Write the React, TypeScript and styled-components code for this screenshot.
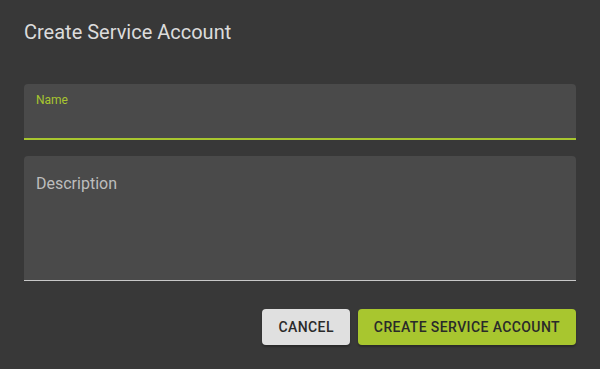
import styled, { createGlobalStyle } from 'styled-components';

const GlobalStyle = createGlobalStyle`
  html, body {
    margin: 0;
    padding: 0;
    background: #383838;
  }
  * {
    box-sizing: border-box;
  }
`;

const Dialog = styled.div`
  width: 600px;
  height: 369px;
  background: #383838;
  font-family: Roboto, 'Liberation Sans', sans-serif;
  display: flex;
  flex-direction: column;
`;

const Title = styled.h2`
  margin: 0;
  padding: 16px 24px;
  font-size: 20px;
  font-weight: 400;
  line-height: 32px;
  color: #dcdcdc;
`;

const Content = styled.div`
  padding: 20px 24px 0;
  display: flex;
  flex-direction: column;
  gap: 16px;
`;

const Field = styled.div<{ $focused?: boolean; $height: number }>`
  position: relative;
  height: ${({ $height }) => $height}px;
  background: #4a4a4a;
  border-radius: 4px 4px 0 0;
  border-bottom: ${({ $focused }) =>
    $focused ? '2px solid #a8c62f' : '1px solid #c8c8c8'};
  padding: 0 12px;
`;

const SmallLabel = styled.label`
  display: block;
  padding-top: 9px;
  font-size: 12px;
  line-height: 14px;
  color: #a8c62f;
`;

const Placeholder = styled.label`
  display: block;
  padding-top: 18px;
  font-size: 16px;
  line-height: 19px;
  color: #bdbdbd;
`;

const Actions = styled.div`
  margin-top: auto;
  padding: 0 24px 24px;
  display: flex;
  justify-content: flex-end;
  gap: 8px;
`;

const Button = styled.button<{ $primary?: boolean }>`
  height: 36px;
  padding: 0 16px;
  border: none;
  border-radius: 4px;
  font-family: Roboto, 'Liberation Sans', sans-serif;
  font-size: 14px;
  font-weight: 500;
  letter-spacing: 0.4px;
  text-transform: uppercase;
  color: #2a2a2a;
  background: ${({ $primary }) => ($primary ? '#a8c62f' : '#e0e0e0')};
  box-shadow: 0 2px 2px rgba(0, 0, 0, 0.25);
  cursor: pointer;
`;

export default function App() {
  return (
    <>
      <GlobalStyle />
      <Dialog>
        <Title>Create Service Account</Title>
        <Content>
          <Field $focused $height={56}>
            <SmallLabel>Name</SmallLabel>
          </Field>
          <Field $height={125}>
            <Placeholder>Description</Placeholder>
          </Field>
        </Content>
        <Actions>
          <Button>Cancel</Button>
          <Button $primary>Create Service Account</Button>
        </Actions>
      </Dialog>
    </>
  );
}
